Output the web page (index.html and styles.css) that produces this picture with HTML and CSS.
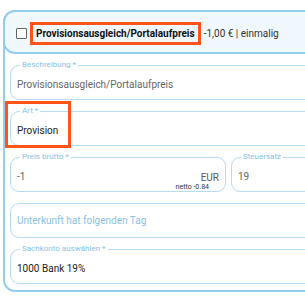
FILE: index.html
```html
<!DOCTYPE html>
<html lang="de">
<head>
  <meta charset="UTF-8">
  <title>Provision</title>
  <link rel="stylesheet" href="styles.css">
</head>
<body>
  <div class="card">
    <div class="card-header">
      <span class="check"></span>
      <span class="title mark">Provisionsausgleich/Portalaufpreis</span>
      <span class="amount">-1,00 € | einmalig</span>
    </div>

    <div class="card-body">
      <fieldset class="field">
        <legend>Beschreibung *</legend>
        <div class="value muted">Provisionsausgleich/Portalaufpreis</div>
      </fieldset>

      <div class="marked-field">
        <fieldset class="field">
          <legend>Art *</legend>
          <div class="value">Provision</div>
        </fieldset>
        <div class="mark-box"></div>
      </div>

      <div class="field-row">
        <fieldset class="field price">
          <legend>Preis brutto *</legend>
          <div class="value muted">-1</div>
          <div class="unit">
            <span class="currency">EUR</span>
            <span class="netto">netto -0.84</span>
          </div>
        </fieldset>
        <fieldset class="field tax">
          <legend>Steuersatz</legend>
          <div class="value muted">19</div>
        </fieldset>
      </div>

      <div class="field plain">
        <div class="value placeholder">Unterkunft hat folgenden Tag</div>
      </div>

      <fieldset class="field">
        <legend>Sachkonto auswählen *</legend>
        <div class="value">1000 Bank 19%</div>
      </fieldset>
    </div>
  </div>
</body>
</html>
```

FILE: styles.css
```css
body {
  margin: 0;
  overflow: hidden;
  font-family: Roboto, "Liberation Sans", sans-serif;
  background-color: white;
  color: #222;
}
.card {
  margin: 10px -60px 0 3px;
  border: 2px solid #95cdec;
  border-radius: 12px;
  padding-bottom: 6px;
}
.card-header {
  display: flex;
  align-items: center;
  height: 38px;
  margin: -2px -2px 0 -2px;
  padding: 2px 0 0 11px;
  border: 2px solid #95cdec;
  border-radius: 12px;
  background-color: #f0f8fe;
}
.check {
  width: 9px;
  height: 9px;
  border: 1px solid #666;
  border-radius: 1px;
  background-color: white;
  margin-right: 3px;
}
.title {
  font-size: 10px;
  line-height: 12px;
  font-weight: bold;
  color: #111;
  padding: 3px 3px 2px;
}
.mark {
  border: 3px solid #ff5418;
}
.amount {
  font-size: 10px;
  color: #333;
  margin-left: 3px;
}
.card-body {
  display: flex;
  flex-direction: column;
  padding: 0 0 0 5px;
}
.field {
  margin: 6px 0 0 0;
  padding: 0 6px;
  border: 1.5px solid #b5dcf3;
  border-radius: 9px;
  min-width: 0;
}
.field legend {
  font-size: 8px;
  line-height: 10px;
  color: #86c2e8;
  padding: 0 2px;
  margin-left: 3px;
}
.field.plain {
  margin-top: 11px;
}
.value {
  height: 29px;
  display: flex;
  align-items: center;
  font-size: 10px;
  color: #222;
}
.plain .value {
  height: 33px;
}
.value.muted {
  color: #666;
}
.value.placeholder {
  color: #86c2e8;
}
.marked-field {
  position: relative;
}
.mark-box {
  position: absolute;
  left: -5px;
  top: 1px;
  width: 60px;
  height: 41px;
  border: 3px solid #ff5418;
}
.field-row {
  display: flex;
  gap: 5px;
}
.price {
  width: 216px;
  box-sizing: border-box;
  display: flex;
}
.price .value {
  flex: 1;
}
.unit {
  display: flex;
  flex-direction: column;
  align-items: flex-end;
  justify-content: flex-end;
  color: #555;
}
.currency {
  font-size: 10px;
  line-height: 12px;
}
.netto {
  font-size: 7px;
  line-height: 7px;
  margin-right: 10px;
  color: #333;
}
.tax {
  flex: 1;
}
```
